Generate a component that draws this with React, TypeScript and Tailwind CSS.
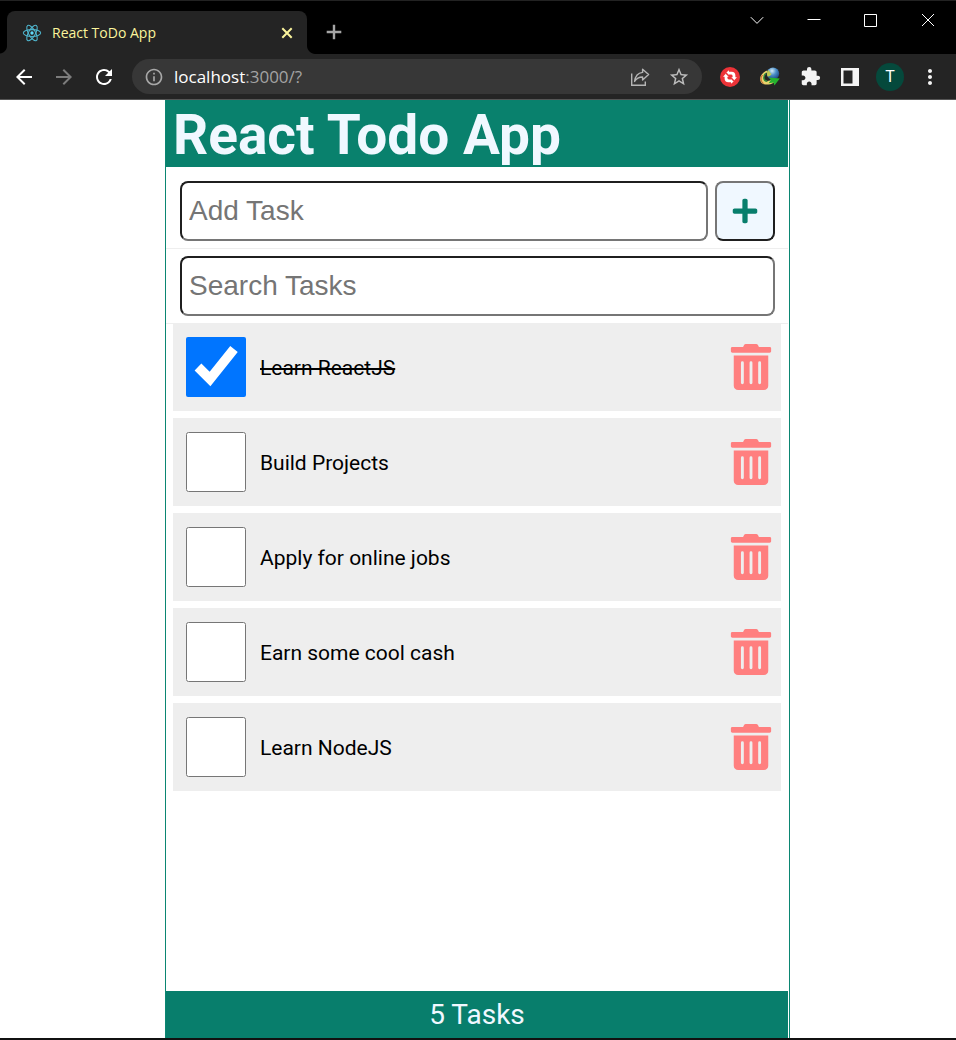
import { useState, type FormEvent, type ReactNode } from "react";
import { FaPlus, FaTrashAlt } from "react-icons/fa";
import {
  MdArrowBack,
  MdArrowForward,
  MdExtension,
  MdInfoOutline,
  MdMoreVert,
  MdRefresh,
  MdStarBorder,
} from "react-icons/md";

type Task = { id: number; title: string; checked: boolean };

const initialTasks: Task[] = [
  { id: 1, title: "Learn ReactJS", checked: true },
  { id: 2, title: "Build Projects", checked: false },
  { id: 3, title: "Apply for online jobs", checked: false },
  { id: 4, title: "Earn some cool cash", checked: false },
  { id: 5, title: "Learn NodeJS", checked: false },
];

function ReactLogo() {
  return (
    <svg viewBox="0 0 24 24" className="size-5 shrink-0" fill="none" stroke="#4fb4cc" strokeWidth="1.3">
      <circle cx="12" cy="12" r="2" fill="#61dafb" stroke="none" />
      <ellipse cx="12" cy="12" rx="10.4" ry="4.1" />
      <ellipse cx="12" cy="12" rx="10.4" ry="4.1" transform="rotate(60 12 12)" />
      <ellipse cx="12" cy="12" rx="10.4" ry="4.1" transform="rotate(120 12 12)" />
    </svg>
  );
}

function ShareIcon() {
  return (
    <svg viewBox="0 0 20 20" className="size-5" fill="none" stroke="#b5b5b5" strokeWidth="1.4">
      <path d="M1.7 6.5V18.3H15.3V14.5" />
      <path d="M12.6 2.2 18.6 7.6 12.6 13V10C8.6 10 6.4 11.4 4.6 14.4 5.2 9.6 7.8 6 12.6 5.4Z" strokeLinejoin="round" />
    </svg>
  );
}

function SyncExtensionIcon() {
  return (
    <svg viewBox="0 0 20 20" className="size-5">
      <circle cx="10" cy="10" r="10" fill="#ec3338" />
      <path d="M9 3.2V4.8H11.6A4 4 0 0 1 15.4 8.8V10.2H17L14 13.6 11 10.2H12.6V9A1.6 1.6 0 0 0 11 7.6H9V9.2L5.4 6.2Z" fill="#fff" />
      <path d="M11 16.8V15.2H8.4A4 4 0 0 1 4.6 11.2V9.8H3L6 6.4 9 9.8H7.4V11A1.6 1.6 0 0 0 9 12.4H11V10.8L14.6 13.8Z" fill="#fff" />
      <path d="M5.2 5.2 14.8 14.8" stroke="#ec3338" strokeWidth="1.5" />
    </svg>
  );
}

function DownloadExtensionIcon() {
  return (
    <svg viewBox="0 0 20 20" className="size-5">
      <defs>
        <radialGradient id="globe" cx="0.42" cy="0.28" r="0.75">
          <stop offset="0" stopColor="#d7ecf5" />
          <stop offset="0.45" stopColor="#4b8fc9" />
          <stop offset="1" stopColor="#173f7c" />
        </radialGradient>
      </defs>
      <path d="M7.4 3.6C2 5.2-1 10 .6 14.4 2.6 18.4 9 18.6 14 15.4L12.4 12.6C8 14.8 4 14.2 3.8 11.2 3.6 8.4 5.6 6 7.6 5Z" fill="#e9d36b" />
      <path d="M2.4 8C.4 11 .6 14.8 3.6 16.4" fill="none" stroke="#c9532b" strokeWidth="1" />
      <path d="M5.8 6.4C2.8 9 3 13.8 7.4 14.4" fill="none" stroke="#2f8a3c" strokeWidth="1.4" />
      <circle cx="13" cy="6.6" r="6.2" fill="url(#globe)" />
      <path d="M8.4 3C10 4 9.6 6 11.6 7 10.8 8.8 9.2 9.6 7.6 9.4 6.4 7.2 6.8 4.6 8.4 3Z" fill="#bcc850" />
      <path d="M9 10.4 19.8 11.6 14.4 18.4 13.6 15.4 8.6 16.2 10.8 13.2Z" fill="#25b32d" />
    </svg>
  );
}

function PageButton({ label, children }: { label: string; children: ReactNode }) {
  return (
    <button type="button" aria-label={label} className="flex w-7 shrink-0 items-center justify-center">
      {children}
    </button>
  );
}

function WindowButton({ label, path }: { label: string; path: string }) {
  return (
    <button type="button" aria-label={label} className="flex h-full w-[57px] items-center justify-center">
      <svg viewBox="0 0 14 14" className="size-3.5" fill="none" stroke="#fff" strokeWidth="1">
        <path d={path} />
      </svg>
    </button>
  );
}

function TabStrip() {
  return (
    <div className="flex h-[54px] items-end border-t border-[#222] bg-black">
      <svg viewBox="0 0 7 8" className="h-2 w-[7px] shrink-0">
        <path d="M7 0V8H0V7.6C4 7 7 4 7 0Z" fill="#242424" />
      </svg>
      <div className="flex h-[43px] w-[300px] items-center rounded-t-lg bg-[#242424] pr-3.5 pl-[15px]">
        <ReactLogo />
        <span className="ml-2.5 flex-1 font-['Open_Sans','Noto_Sans',sans-serif] text-sm text-[#fbf49c]">
          React ToDo App
        </span>
        <button type="button" aria-label="Close tab">
          <svg viewBox="0 0 12 12" className="size-3" fill="none" stroke="#fbf49c" strokeWidth="2">
            <path d="M1.3 1.3 10.7 10.7M10.7 1.3 1.3 10.7" />
          </svg>
        </button>
      </div>
      <svg viewBox="0 0 8 8" className="size-2 shrink-0">
        <path d="M0 0V8H8C4 8 0 4 0 0Z" fill="#242424" />
      </svg>
      <button type="button" aria-label="New tab" className="mb-3.5 ml-[11px]">
        <svg viewBox="0 0 16 16" className="size-4" fill="none" stroke="#a5a5a5" strokeWidth="2.4">
          <path d="M8 .7V15.3M.7 8H15.3" />
        </svg>
      </button>
      <div className="ml-auto flex h-[38px] self-start">
        <WindowButton label="Search tabs" path="M.8 4.2 7 10.4 13.2 4.2" />
        <WindowButton label="Minimize" path="M.5 6.5H13.5" />
        <WindowButton label="Maximize" path="M.5 1.5H12.5V13.5H.5Z" />
        <WindowButton label="Close window" path="M1 1 13 13M13 1 1 13" />
      </div>
    </div>
  );
}

function Toolbar() {
  return (
    <div className="flex h-[46px] items-center border-b border-[#555] bg-[#242424] pr-3 pl-3">
      <div className="flex gap-4">
        <button type="button" aria-label="Back">
          <MdArrowBack className="size-6 text-white" />
        </button>
        <button type="button" aria-label="Forward">
          <MdArrowForward className="size-6 text-[#7c7c7c]" />
        </button>
        <button type="button" aria-label="Reload">
          <MdRefresh className="size-6 text-white" />
        </button>
      </div>
      <div className="ml-4 flex h-[35px] flex-1 items-center rounded-full bg-[#373737] pr-3 pl-3">
        <MdInfoOutline className="size-5 text-[#a8a8a8]" />
        <div className="ml-2.5 flex-1 font-['Open_Sans','Noto_Sans',sans-serif] text-[17px] leading-6 text-[#a3a3a3]">
          <span className="text-white">localhost</span>:3000/?
        </div>
        <button type="button" aria-label="Share">
          <ShareIcon />
        </button>
        <button type="button" aria-label="Bookmark" className="ml-[18px]">
          <MdStarBorder className="size-[22px] text-[#bdbdbd]" />
        </button>
      </div>
      <div className="ml-3.5 flex items-center gap-3">
        <PageButton label="Sync extension">
          <SyncExtensionIcon />
        </PageButton>
        <PageButton label="Download extension">
          <DownloadExtensionIcon />
        </PageButton>
        <PageButton label="Extensions">
          <MdExtension className="size-[21px] text-[#f3f3f3]" />
        </PageButton>
        <PageButton label="Side panel">
          <svg viewBox="0 0 18 18" className="size-[18px]">
            <path d="M0 0H18V18H0ZM2.5 2.5V15.5H11.5V2.5Z" fill="#f3f3f3" fillRule="evenodd" />
          </svg>
        </PageButton>
        <button
          type="button"
          className="size-7 rounded-full bg-[#05493c] font-[Roboto,sans-serif] text-base text-white"
        >
          T
        </button>
        <PageButton label="Menu">
          <MdMoreVert className="size-6 text-[#f3f3f3]" />
        </PageButton>
      </div>
    </div>
  );
}

const fieldClass =
  "h-15 min-w-0 flex-1 rounded-lg border-2 border-t-[#1f1f1f] border-r-[#767676] border-b-[#767676] border-l-[#1f1f1f] bg-white px-[7px] font-['Liberation_Sans',sans-serif] text-[28px] text-black placeholder:text-[#757575]";

export default function App() {
  const [tasks, setTasks] = useState(initialTasks);
  const [newTask, setNewTask] = useState("");
  const [search, setSearch] = useState("");

  const addTask = (event: FormEvent) => {
    event.preventDefault();
    const title = newTask.trim();
    if (!title) return;
    setTasks([...tasks, { id: Date.now(), title, checked: false }]);
    setNewTask("");
  };

  const toggle = (id: number) =>
    setTasks(tasks.map((task) => (task.id === id ? { ...task, checked: !task.checked } : task)));

  const visible = tasks.filter((task) => task.title.toLowerCase().includes(search.toLowerCase()));

  return (
    <div className="flex min-h-screen flex-col border-b-2 border-[#111] bg-white">
      <TabStrip />
      <Toolbar />
      <div className="flex flex-1 flex-col pr-px">
        <div className="mx-auto flex w-full max-w-[625px] flex-1 flex-col border-r border-l border-r-[#0b8672] border-l-[#0b8672] pr-px font-[Roboto,sans-serif]">
          <header className="bg-[#09816d] px-[7px] pt-[3px]">
            <h1 className="text-[55px] leading-16 font-bold text-[#f0f8ff]">React Todo App</h1>
          </header>
          <main className="flex flex-1 flex-col">
            <form onSubmit={addTask} className="flex gap-[7px] border-b border-[#eee] pt-3.5 pr-[13px] pb-[7px] pl-3.5">
              <input
                aria-label="Add Task"
                placeholder="Add Task"
                value={newTask}
                onChange={(event) => setNewTask(event.target.value)}
                className={fieldClass}
              />
              <button
                type="submit"
                aria-label="Add"
                className="flex size-15 items-center justify-center rounded-lg border-2 border-t-[#767676] border-r-[#1f1f1f] border-b-[#1f1f1f] border-l-[#767676] bg-[#f0f8ff] text-[#087e6c]"
              >
                <FaPlus className="size-7" />
              </button>
            </form>
            <form
              onSubmit={(event) => event.preventDefault()}
              className="flex py-[7px] pr-[13px] pl-3.5"
            >
              <input
                aria-label="Search Tasks"
                placeholder="Search Tasks"
                value={search}
                onChange={(event) => setSearch(event.target.value)}
                className={fieldClass}
              />
            </form>
            <div className="border-t border-[#eee] px-[7px]">
              <ul className="-mt-px flex flex-col gap-[7px]">
                {visible.map((task) => (
                  <li key={task.id} className="flex h-22 items-center bg-[#eee] pr-[7px] pl-[13px]">
                    <input
                      id={`task-${task.id}`}
                      type="checkbox"
                      checked={task.checked}
                      onChange={() => toggle(task.id)}
                      className="size-15 shrink-0"
                    />
                    <label
                      htmlFor={`task-${task.id}`}
                      className={`ml-3.5 flex-1 pt-0.5 text-[21px] leading-8 text-black ${task.checked ? "line-through" : ""}`}
                    >
                      {task.title}
                    </label>
                    <button
                      type="button"
                      aria-label={`Delete ${task.title}`}
                      onClick={() => setTasks(tasks.filter((other) => other.id !== task.id))}
                    >
                      <FaTrashAlt className="size-[46px] text-[#ff7f7f]" />
                    </button>
                  </li>
                ))}
              </ul>
            </div>
          </main>
          <footer className="bg-[#087e6c] text-center text-[28px] leading-[47px] text-[#f0f8ff]">
            {tasks.length} {tasks.length === 1 ? "Task" : "Tasks"}
          </footer>
        </div>
      </div>
    </div>
  );
}
